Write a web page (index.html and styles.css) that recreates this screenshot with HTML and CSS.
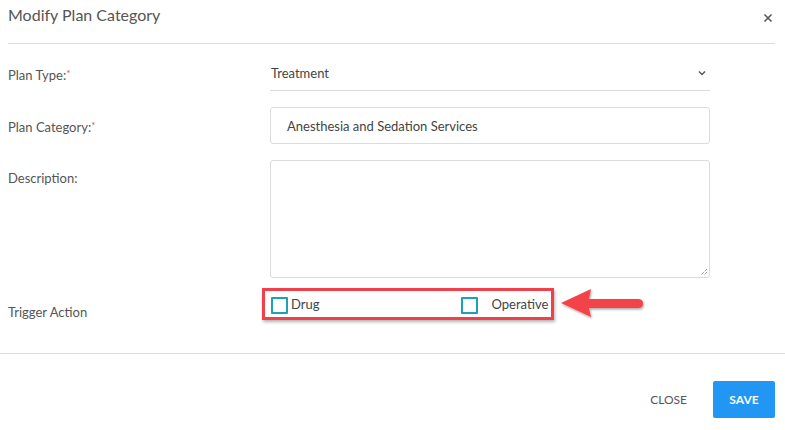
FILE: index.html
```html
<!DOCTYPE html>
<html>
<head>
<meta charset="utf-8">
<link rel="stylesheet" href="styles.css">
</head>
<body>
<div class="modal">
  <div class="header">
    <div class="title">Modify Plan Category</div>
    <div class="close-x">
      <svg width="10" height="10" viewBox="0 0 10 10"><path d="M1.5 1.5 L8.5 8.5 M8.5 1.5 L1.5 8.5" stroke="#555" stroke-width="1.5" fill="none"/></svg>
    </div>
  </div>
  <div class="form">
    <div class="label row-select">Plan Type:<span class="req">*</span></div>
    <div class="select">
      <span>Treatment</span>
      <svg class="chev" width="8" height="6" viewBox="0 0 8 6"><path d="M1 1.5 L4 4.5 L7 1.5" stroke="#555" stroke-width="1.4" fill="none"/></svg>
    </div>

    <div class="label row-input">Plan Category:<span class="req">*</span></div>
    <div class="input">Anesthesia and Sedation Services</div>

    <div class="label row-desc">Description:</div>
    <div class="textarea">
      <svg class="grip" width="8" height="8" viewBox="0 0 8 8"><path d="M7 1 L1 7 M7 4 L4 7" stroke="#777" stroke-width="1" fill="none" stroke-dasharray="1 1"/></svg>
    </div>

    <div class="label row-trigger">Trigger Action</div>
    <div class="trigger-wrap">
      <div class="highlight">
        <label class="check"><span class="box"></span><span class="check-text">Drug</span></label>
        <label class="check op"><span class="box"></span><span class="check-text op-text">Operative</span></label>
      </div>
      <svg class="arrow" width="90" height="40" viewBox="0 0 90 40">
        <defs>
          <filter id="sh" x="-20%" y="-30%" width="140%" height="160%">
            <feDropShadow dx="1" dy="1.5" stdDeviation="1.2" flood-color="#000" flood-opacity="0.35"/>
          </filter>
        </defs>
        <g filter="url(#sh)" fill="#f4434a">
          <path d="M3 18 L33 4 L31 14 L80 14 Q85 14 85 18.5 Q85 23 80 23 L31 23 L33 32 Z"/>
        </g>
      </svg>
    </div>
  </div>
  <div class="footer">
    <button class="btn-close">CLOSE</button>
    <button class="btn-save">SAVE</button>
  </div>
</div>
</body>
</html>
```
FILE: styles.css
```css
html, body {
  margin: 0;
  padding: 0;
  background: #fff;
}
body {
  font-family: Lato, "Open Sans", sans-serif;
  color: #555;
  width: 785px;
  height: 430px;
  overflow: hidden;
}
.modal {
  width: 785px;
}
.header {
  height: 43px;
  margin: 0 10px 0 8px;
  border-bottom: 1px solid #dcdcdc;
  display: flex;
  justify-content: space-between;
  align-items: flex-start;
}
.title {
  font-size: 16px;
  color: #555;
  padding-top: 5px;
  line-height: 20px;
}
.close-x {
  padding-top: 7px;
  margin-right: 2px;
}
.form {
  display: grid;
  grid-template-columns: 262px 440px;
  row-gap: 16px;
  padding: 11px 0 0 8px;
}
.label {
  font-size: 13px;
  color: #555;
  line-height: 18px;
}
.req {
  color: #e84c4c;
  font-size: 10px;
  vertical-align: 3px;
}
.row-select {
  padding-top: 9px;
}
.select {
  height: 36px;
  border-bottom: 1px solid #dcdcdc;
  box-sizing: border-box;
  display: flex;
  align-items: center;
  justify-content: space-between;
  padding: 0 4px 0 1px;
  font-size: 13px;
  color: #444;
}
.row-input {
  padding-top: 9px;
}
.input {
  height: 37px;
  box-sizing: border-box;
  border: 1px solid #dcdcdc;
  border-radius: 3px;
  display: flex;
  align-items: center;
  padding-left: 16px;
  font-size: 13px;
  color: #444;
}
.row-desc {
  padding-top: 9px;
}
.textarea {
  height: 118px;
  box-sizing: border-box;
  border: 1px solid #dcdcdc;
  border-radius: 3px;
  position: relative;
}
.grip {
  position: absolute;
  right: 1px;
  bottom: 1px;
}
.row-trigger {
  padding-top: 15px;
  margin-top: -6px;
}
.trigger-wrap {
  margin-top: -6px;
  margin-left: -8px;
  position: relative;
  height: 32px;
}
.highlight {
  width: 292px;
  height: 32px;
  box-sizing: border-box;
  border: 3px solid #f0404a;
  box-shadow: 1px 2px 3px rgba(0,0,0,0.3);
  display: flex;
  align-items: center;
  padding-left: 6px;
}
.check {
  display: flex;
  align-items: center;
  font-size: 13px;
  color: #444;
}
.box {
  width: 17px;
  height: 17px;
  box-sizing: border-box;
  border: 2px solid #1ba3b5;
  border-radius: 1px;
  margin-top: 2px;
}
.check-text {
  margin-left: 3px;
}
.op {
  margin-left: 141px;
}
.op-text {
  margin-left: 14px;
}
.arrow {
  position: absolute;
  left: 296px;
  top: -3px;
}
.footer {
  margin-top: 32px;
  border-top: 1px solid #dcdcdc;
  height: 76px;
  display: flex;
  align-items: center;
  justify-content: flex-end;
  padding-right: 10px;
  padding-top: 16px;
  box-sizing: border-box;
}
.btn-close {
  background: none;
  border: none;
  font-family: inherit;
  font-size: 12px;
  color: #555;
  padding: 0;
  margin-right: 26px;
}
.btn-save {
  width: 62px;
  height: 37px;
  background: #2196f3;
  border: none;
  border-radius: 2px;
  color: #fff;
  font-family: inherit;
  font-size: 12px;
  font-weight: bold;
}
```
